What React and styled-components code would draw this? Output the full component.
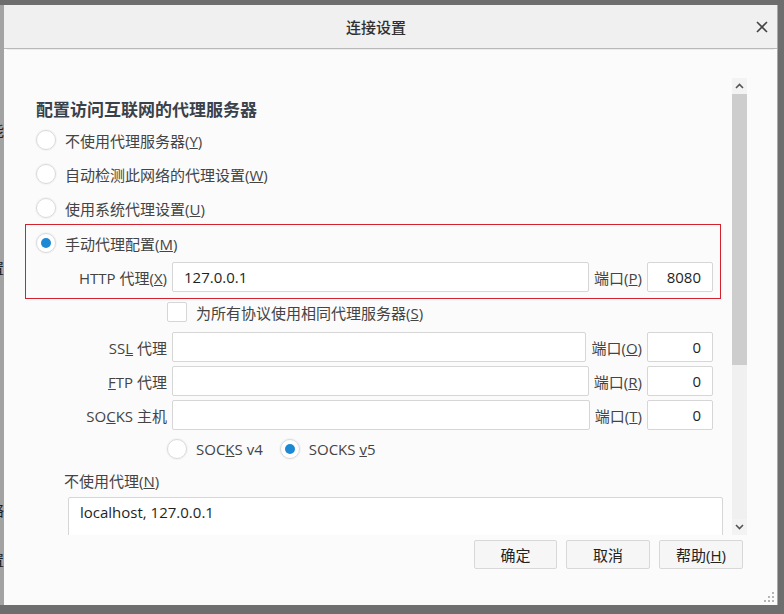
import React from "react";
import styled, { createGlobalStyle } from "styled-components";

const GlobalStyle = createGlobalStyle`
  html, body {
    margin: 0;
    padding: 0;
    background: #6e6e6e;
    overflow: hidden;
  }
  body {
    font-family: "Open Sans", "Noto Sans CJK SC", sans-serif;
    font-size: 15px;
    color: #3a3a3a;
  }
`;

const Screen = styled.div`
  display: flex;
  height: 614px;
  box-sizing: border-box;
  padding: 5px 6px 9px 0;
  background: #6e6e6e;
`;

const Behind = styled.div`
  width: 4px;
  flex: none;
  overflow: hidden;
  display: flex;
  flex-direction: column;
  align-items: flex-end;
  background: #a3a3a3;
  color: #1c1c1c;
  font-family: "Noto Sans CJK SC", sans-serif;
  font-size: 15px;
  line-height: 20px;
`;

const Fragment = styled.div`
  white-space: nowrap;
  margin-top: ${p => p.$top}px;
`;

const Dialog = styled.div`
  position: relative;
  width: 774px;
  height: 600px;
  flex: none;
  display: flex;
  flex-direction: column;
  background: #fbfbfb;
  box-sizing: border-box;
  border-right: 1px solid #a9a9a9;
`;

const Header = styled.div`
  height: 43px;
  flex: none;
  display: flex;
  align-items: center;
  background: #f0f0f0;
  border-bottom: 1px solid #b8b8b8;
  box-shadow: 0 4px 0 -3px #ececec;
`;

const Title = styled.div`
  flex: 1;
  text-align: center;
  font-family: "Noto Sans CJK SC", sans-serif;
  font-size: 15px;
  font-weight: 500;
  color: #2f2f2f;
`;

const CloseBtn = styled.div`
  width: 28px;
  display: flex;
  justify-content: center;
  align-items: center;
  margin-right: 1px;
`;

const Body = styled.div`
  flex: 1;
  display: flex;
  flex-direction: column;
  padding: 29px 30px 0 21px;
`;

const ScrollArea = styled.div`
  display: flex;
  height: 457px;
  flex: none;
  gap: 8px;
`;

const Content = styled.div`
  flex: 1;
  overflow: hidden;
  display: flex;
  flex-direction: column;

  & > * {
    flex-shrink: 0;
  }
`;

const Heading = styled.div`
  margin: 19px 0 2px 11px;
  font-family: "Noto Sans CJK SC", sans-serif;
  font-size: 17px;
  font-weight: 700;
  line-height: 24px;
  color: #39414a;
`;

const RadioRow = styled.div`
  display: flex;
  align-items: center;
  gap: 9px;
  height: 34px;
  flex-shrink: 0;
  padding-left: ${p => p.$indent}px;
  color: #444;
`;

const Radio = styled.span`
  width: 20px;
  height: 20px;
  flex: none;
  box-sizing: border-box;
  border-radius: 50%;
  border: 1px solid #dadada;
  background: #fff;
  display: flex;
  align-items: center;
  justify-content: center;
  box-shadow: 0 0 0 1px #f4f4f4;

  &::after {
    content: "";
    width: 10px;
    height: 10px;
    border-radius: 50%;
    background: ${p => (p.$checked ? "#1d89d2" : "transparent")};
  }
`;

const Highlight = styled.div`
  margin: -1px 3px 0 0;
  border: 1px solid #d5202d;
  padding: 1px 7px 6px 0;
  display: flex;
  flex-direction: column;
  gap: 2px;
`;

const FieldRow = styled.div`
  display: flex;
  align-items: center;
  gap: 5px;
  height: 30px;
  flex-shrink: 0;
  padding-right: ${p => p.$pr}px;
`;

const FieldLabel = styled.div`
  width: ${p => p.$w}px;
  flex: none;
  text-align: right;
  white-space: nowrap;
  color: #444;
`;

const TextBox = styled.input`
  height: 30px;
  box-sizing: border-box;
  border: 1px solid #d6d6d6;
  border-radius: 2px;
  background: #fff;
  font-family: "Open Sans", "Noto Sans CJK SC", sans-serif;
  font-size: 15px;
  color: #1f1f1f;
  outline: none;
  flex: ${p => (p.$port ? "none" : "1")};
  min-width: 0;
  width: ${p => (p.$port ? "66px" : "auto")};
  text-align: ${p => (p.$port ? "right" : "left")};
  padding: ${p => (p.$port ? "0 11px 0 4px" : "0 10px 0 11px")};
`;

const PortLabel = styled.div`
  flex: none;
  white-space: nowrap;
  color: #444;
`;

const CheckRow = styled.div`
  display: flex;
  align-items: center;
  gap: 9px;
  height: 20px;
  margin: 3px 0 10px;
  padding-left: 142px;
  color: #444;
`;

const Checkbox = styled.span`
  width: 20px;
  height: 20px;
  box-sizing: border-box;
  border: 1px solid #d6d6d6;
  border-radius: 2px;
  background: #fff;
`;

const Fields = styled.div`
  display: flex;
  flex-direction: column;
  gap: 4px;
`;

const SocksRow = styled.div`
  display: flex;
  align-items: center;
  height: 32px;
  margin-top: 3px;
  padding-left: 142px;
  gap: 17px;
`;

const SocksOption = styled.div`
  display: flex;
  align-items: center;
  gap: 9px;
  color: #444;
`;

const NoProxyLabel = styled.div`
  margin-top: 4px;
  padding-left: 39px;
  line-height: 24px;
  color: #444;
`;

const Area = styled.div`
  margin: 4px 1px 0 43px;
  height: 80px;
  box-sizing: border-box;
  border: 1px solid #d6d6d6;
  border-radius: 2px;
  background: #fff;
  padding: 4px 11px;
  line-height: 20px;
  color: #1f1f1f;
`;

const Scrollbar = styled.div`
  width: 15px;
  flex: none;
  display: flex;
  flex-direction: column;
  background: #f0f0f0;
`;

const ArrowBtn = styled.div`
  height: 16px;
  flex: none;
  display: flex;
  align-items: center;
  justify-content: center;
  background: #f3f3f3;
`;

const Thumb = styled.div`
  height: 271px;
  flex: none;
  background: #cdcdcd;
`;

const Track = styled.div`
  flex: 1;
`;

const ButtonRow = styled.div`
  display: flex;
  justify-content: flex-end;
  gap: 9px;
  margin-top: 5px;
  padding-right: 4px;
`;

const Button = styled.div`
  width: ${p => p.$w}px;
  height: 29px;
  box-sizing: border-box;
  display: flex;
  align-items: center;
  justify-content: center;
  border: 1px solid #d8d8d8;
  border-radius: 2px;
  background: #f6f6f6;
  color: #222;
  font-size: 15px;
`;

const Grip = styled.svg`
  position: absolute;
  right: 3px;
  bottom: 3px;
`;

const Chevron = ({ up }) => (
  <svg width="9" height="6" viewBox="0 0 9 6">
    <path
      d={up ? "M1 5 L4.5 1.5 L8 5" : "M1 1 L4.5 4.5 L8 1"}
      fill="none"
      stroke="#555"
      strokeWidth="1.6"
    />
  </svg>
);

export default function App() {
  return (
    <>
      <GlobalStyle />
      <Screen>
        <Behind>
          <Fragment $top={115}>能</Fragment>
          <Fragment $top={118}>置</Fragment>
          <Fragment $top={222}>络</Fragment>
          <Fragment $top={30}>置</Fragment>
        </Behind>
        <Dialog>
          <Header>
            <Title>连接设置</Title>
            <CloseBtn>
              <svg width="12" height="12" viewBox="0 0 12 12">
                <path d="M1 1 L11 11 M11 1 L1 11" stroke="#444" strokeWidth="1.6" fill="none" />
              </svg>
            </CloseBtn>
          </Header>
          <Body>
            <ScrollArea>
              <Content>
                <Heading>配置访问互联网的代理服务器</Heading>
                <RadioRow $indent={11}>
                  <Radio />
                  <span>不使用代理服务器(<u>Y</u>)</span>
                </RadioRow>
                <RadioRow $indent={11}>
                  <Radio />
                  <span>自动检测此网络的代理设置(<u>W</u>)</span>
                </RadioRow>
                <RadioRow $indent={11}>
                  <Radio />
                  <span>使用系统代理设置(<u>U</u>)</span>
                </RadioRow>
                <Highlight>
                  <RadioRow $indent={10}>
                    <Radio $checked />
                    <span>手动代理配置(<u>M</u>)</span>
                  </RadioRow>
                  <FieldRow $pr={0}>
                    <FieldLabel $w={141}>HTTP 代理(<u>X</u>)</FieldLabel>
                    <TextBox readOnly defaultValue="127.0.0.1" />
                    <PortLabel>端口(<u>P</u>)</PortLabel>
                    <TextBox $port readOnly defaultValue="8080" />
                  </FieldRow>
                </Highlight>
                <CheckRow>
                  <Checkbox />
                  <span>为所有协议使用相同代理服务器(<u>S</u>)</span>
                </CheckRow>
                <Fields>
                  <FieldRow $pr={11}>
                    <FieldLabel $w={142}>SS<u>L</u> 代理</FieldLabel>
                    <TextBox readOnly defaultValue="" />
                    <PortLabel>端口(<u>O</u>)</PortLabel>
                    <TextBox $port readOnly defaultValue="0" />
                  </FieldRow>
                  <FieldRow $pr={11}>
                    <FieldLabel $w={142}><u>F</u>TP 代理</FieldLabel>
                    <TextBox readOnly defaultValue="" />
                    <PortLabel>端口(<u>R</u>)</PortLabel>
                    <TextBox $port readOnly defaultValue="0" />
                  </FieldRow>
                  <FieldRow $pr={11}>
                    <FieldLabel $w={142}>SO<u>C</u>KS 主机</FieldLabel>
                    <TextBox readOnly defaultValue="" />
                    <PortLabel>端口(<u>T</u>)</PortLabel>
                    <TextBox $port readOnly defaultValue="0" />
                  </FieldRow>
                </Fields>
                <SocksRow>
                  <SocksOption>
                    <Radio />
                    <span>SOC<u>K</u>S v4</span>
                  </SocksOption>
                  <SocksOption>
                    <Radio $checked />
                    <span>SOCKS <u>v</u>5</span>
                  </SocksOption>
                </SocksRow>
                <NoProxyLabel>不使用代理(<u>N</u>)</NoProxyLabel>
                <Area>localhost, 127.0.0.1</Area>
              </Content>
              <Scrollbar>
                <ArrowBtn><Chevron up /></ArrowBtn>
                <Thumb />
                <Track />
                <ArrowBtn><Chevron /></ArrowBtn>
              </Scrollbar>
            </ScrollArea>
            <ButtonRow>
              <Button $w={83}>确定</Button>
              <Button $w={84}>取消</Button>
              <Button $w={84}>帮助(<u>H</u>)</Button>
            </ButtonRow>
          </Body>
          <Grip width="10" height="10" viewBox="0 0 10 10">
            <g fill="#b5b5b5">
              <rect x="8" y="0" width="2" height="2" />
              <rect x="4" y="4" width="2" height="2" />
              <rect x="8" y="4" width="2" height="2" />
              <rect x="0" y="8" width="2" height="2" />
              <rect x="4" y="8" width="2" height="2" />
              <rect x="8" y="8" width="2" height="2" />
            </g>
          </Grip>
        </Dialog>
      </Screen>
    </>
  );
}
